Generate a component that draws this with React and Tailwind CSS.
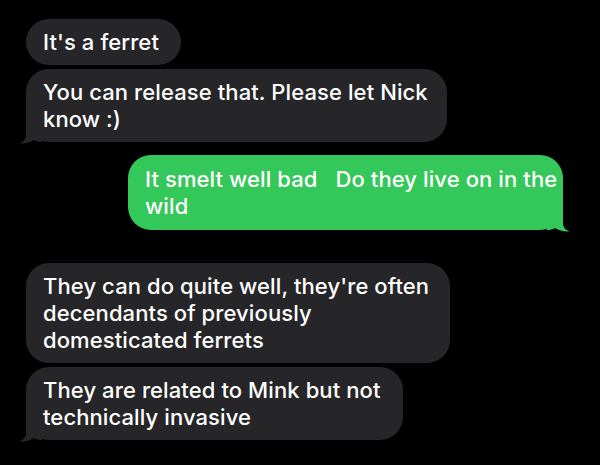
import React from 'react';

// iMessage-style tail, drawn for the left side; mirrored for outgoing
function Tail({ color, side }) {
  const pos = side === 'left' ? 'left-[-8px]' : 'right-[-8px] -scale-x-100';
  return (
    <svg
      className={`absolute bottom-[-3px] ${pos}`}
      width="24"
      height="26"
      viewBox="0 0 24 26"
    >
      <path
        d="M8 0 V16 C8 20 5.5 23 1.5 24.5 C7 25 12 23.5 16 21 C18 22.5 21 23 24 23 V0 Z"
        fill={color}
      />
    </svg>
  );
}

function Bubble({ children, width, out, tail, className = '' }) {
  const bg = out ? 'bg-[#34c759]' : 'bg-[#262628]';
  const color = out ? '#34c759' : '#262628';
  return (
    <div
      className={`relative rounded-[23px] px-[17px] py-[9.5px] text-white ${bg} ${className}`}
      style={{ width }}
    >
      <div className="relative z-10 whitespace-pre">{children}</div>
      {tail && <Tail color={color} side={out ? 'right' : 'left'} />}
    </div>
  );
}

export default function App() {
  return (
    <div
      className="w-[600px] h-[465px] bg-black overflow-hidden pt-[19px] pl-[26px] flex flex-col text-[22px] font-medium leading-[27px] tracking-[0.1px]"
      style={{ fontFamily: 'Inter, "Noto Sans", sans-serif' }}
    >
      <Bubble width={155}>It's a ferret</Bubble>
      <Bubble width={421} tail className="mt-[4px]">
        You can release that. Please let Nick{'\n'}know :)
      </Bubble>
      <Bubble width={435} out tail className="mt-[13px] ml-[102px] py-[10.5px]">
        It smelt well bad   Do they live on in the{'\n'}wild
      </Bubble>
      <Bubble width={424} className="mt-[33px]">
        They can do quite well, they're often{'\n'}decendants of previously{'\n'}domesticated ferrets
      </Bubble>
      <Bubble width={377} tail className="mt-[4px]">
        They are related to Mink but not{'\n'}technically invasive
      </Bubble>
    </div>
  );
}
